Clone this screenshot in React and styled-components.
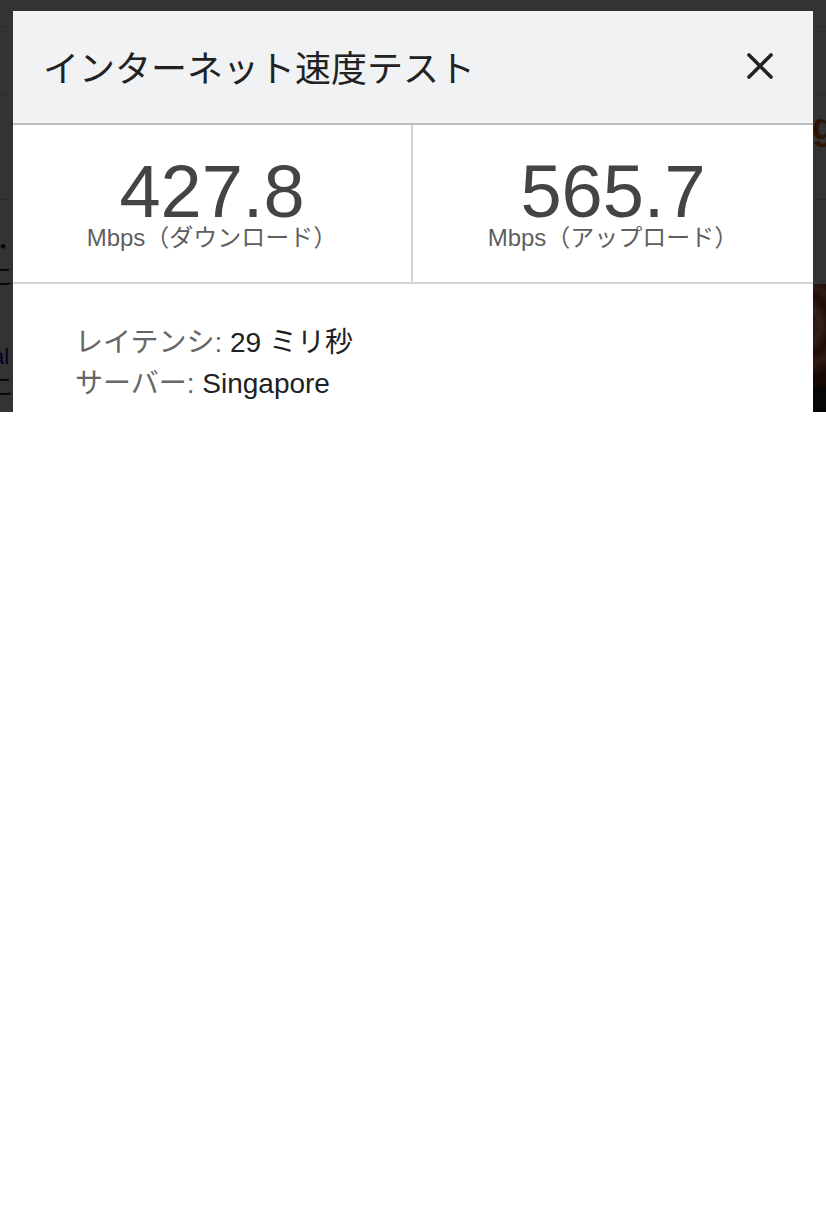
import React from 'react';
import styled, { createGlobalStyle } from 'styled-components';

const Global = createGlobalStyle`
  html, body { margin: 0; padding: 0; background: #ffffff; }
  body { font-family: "Liberation Sans", "Noto Sans CJK JP", sans-serif; }
  * { box-sizing: border-box; }
`;

const Screen = styled.div`
  position: relative;
  width: 826px;
  height: 412px;
  overflow: hidden;
  background: #ffffff;
`;

/* ---------- background page (under the overlay) ---------- */
const BgPage = styled.div`
  display: flex;
  flex-direction: column;
  width: 100%;
  height: 100%;
`;

const BgBar = styled.div`
  flex-shrink: 0;
  height: ${(p) => p.$h}px;
  border-bottom: 1px solid #dadce0;
  display: flex;
  justify-content: space-between;
  align-items: center;
  background: #ffffff;
`;

const BgHeading = styled.span`
  margin-left: auto;
  margin-right: -28px;
  margin-top: -40px;
  font-size: 36px;
  font-weight: 700;
  color: #e06a10;
`;

const BgBody = styled.div`
  flex: 1;
  display: flex;
  justify-content: space-between;
  padding-top: 32px;
`;

const BgText = styled.div`
  display: flex;
  flex-direction: column;
  margin-left: -8px;
  font-size: 22px;
  line-height: 30px;
  color: #202124;
`;

const BgLine = styled.span`
  margin-top: ${(p) => p.$mt || 0}px;
  color: ${(p) => (p.$link ? '#1a0dab' : '#202124')};
`;

const BgSide = styled.div`
  display: flex;
  flex-direction: column;
  width: 40px;
  padding-top: 52px;
`;

const BgImage = styled.div`
  height: 103px;
  background: radial-gradient(circle at 30% 40%, #f0a070 0 10%, #c0502a 20%, #f3b089 32%, #a83a1c 48%, #e48a5a 62%, #7a2810 80%);
`;

const BgDark = styled.div`
  height: 40px;
  background: #202124;
`;

const Overlay = styled.div`
  position: absolute;
  inset: 0;
  background: rgba(0, 0, 0, 0.8);
`;

/* ---------- dialog ---------- */
const Dialog = styled.div`
  position: absolute;
  top: 11px;
  left: 13px;
  width: 800px;
  background: #ffffff;
  display: flex;
  flex-direction: column;
`;

const Header = styled.div`
  height: 114px;
  display: flex;
  align-items: center;
  justify-content: space-between;
  padding: 0 39px 3px 30px;
  background: #f1f2f4;
  border-bottom: 2px solid #bdbdbd;
`;

const Title = styled.h1`
  margin: 0;
  font-family: "Noto Sans CJK JP", sans-serif;
  font-size: 36px;
  font-weight: 400;
  line-height: 1;
  color: #222222;
`;

const CloseButton = styled.button`
  display: flex;
  align-items: center;
  justify-content: center;
  width: 28px;
  height: 28px;
  padding: 0;
  border: none;
  background: transparent;
  cursor: pointer;
`;

const Stats = styled.div`
  display: grid;
  grid-template-columns: 1fr 1fr;
  border-bottom: 2px solid #d3d3d3;
`;

const Stat = styled.div`
  height: 157px;
  display: flex;
  flex-direction: column;
  align-items: center;
  padding-top: 31px;
  border-right: ${(p) => (p.$divider ? '2px solid #d3d3d3' : 'none')};
`;

const Value = styled.div`
  font-size: 74px;
  line-height: 72px;
  color: #444444;
`;

const Unit = styled.div`
  font-size: 24px;
  line-height: 20px;
  color: #5f5f5f;
`;

const Info = styled.div`
  display: flex;
  flex-direction: column;
  padding: 38px 0 40px 62px;
`;

const InfoRow = styled.div`
  font-size: 28px;
  line-height: 41px;
  color: #666666;
`;

const InfoValue = styled.span`
  color: #202124;
`;

const CloseIcon = () => (
  <svg width="28" height="28" viewBox="0 0 28 28" aria-hidden="true">
    <path d="M3 3 L25 25 M25 3 L3 25" stroke="#222222" strokeWidth="3.6" strokeLinecap="round" fill="none" />
  </svg>
);

const stats = [
  { value: '427.8', unit: 'Mbps（ダウンロード）' },
  { value: '565.7', unit: 'Mbps（アップロード）' },
];

export default function App() {
  return (
    <>
      <Global />
      <Screen>
        <BgPage>
          <BgBar $h={27} />
          <BgBar $h={68} />
          <BgBar $h={105}>
            <BgHeading>ge</BgHeading>
          </BgBar>
          <BgBody>
            <BgText>
              <BgLine>・ウェブ</BgLine>
              <BgLine>こ_ンテンツ</BgLine>
              <BgLine $mt={50} $link>al</BgLine>
              <BgLine>こた</BgLine>
            </BgText>
            <BgSide>
              <BgImage />
              <BgDark />
            </BgSide>
          </BgBody>
        </BgPage>
        <Overlay />
        <Dialog role="dialog" aria-label="インターネット速度テスト">
          <Header>
            <Title>インターネット速度テスト</Title>
            <CloseButton aria-label="閉じる">
              <CloseIcon />
            </CloseButton>
          </Header>
          <Stats>
            {stats.map((s, i) => (
              <Stat key={s.unit} $divider={i === 0}>
                <Value>{s.value}</Value>
                <Unit>{s.unit}</Unit>
              </Stat>
            ))}
          </Stats>
          <Info>
            <InfoRow>
              レイテンシ: <InfoValue>29 ミリ秒</InfoValue>
            </InfoRow>
            <InfoRow>
              サーバー: <InfoValue>Singapore</InfoValue>
            </InfoRow>
          </Info>
        </Dialog>
      </Screen>
    </>
  );
}
